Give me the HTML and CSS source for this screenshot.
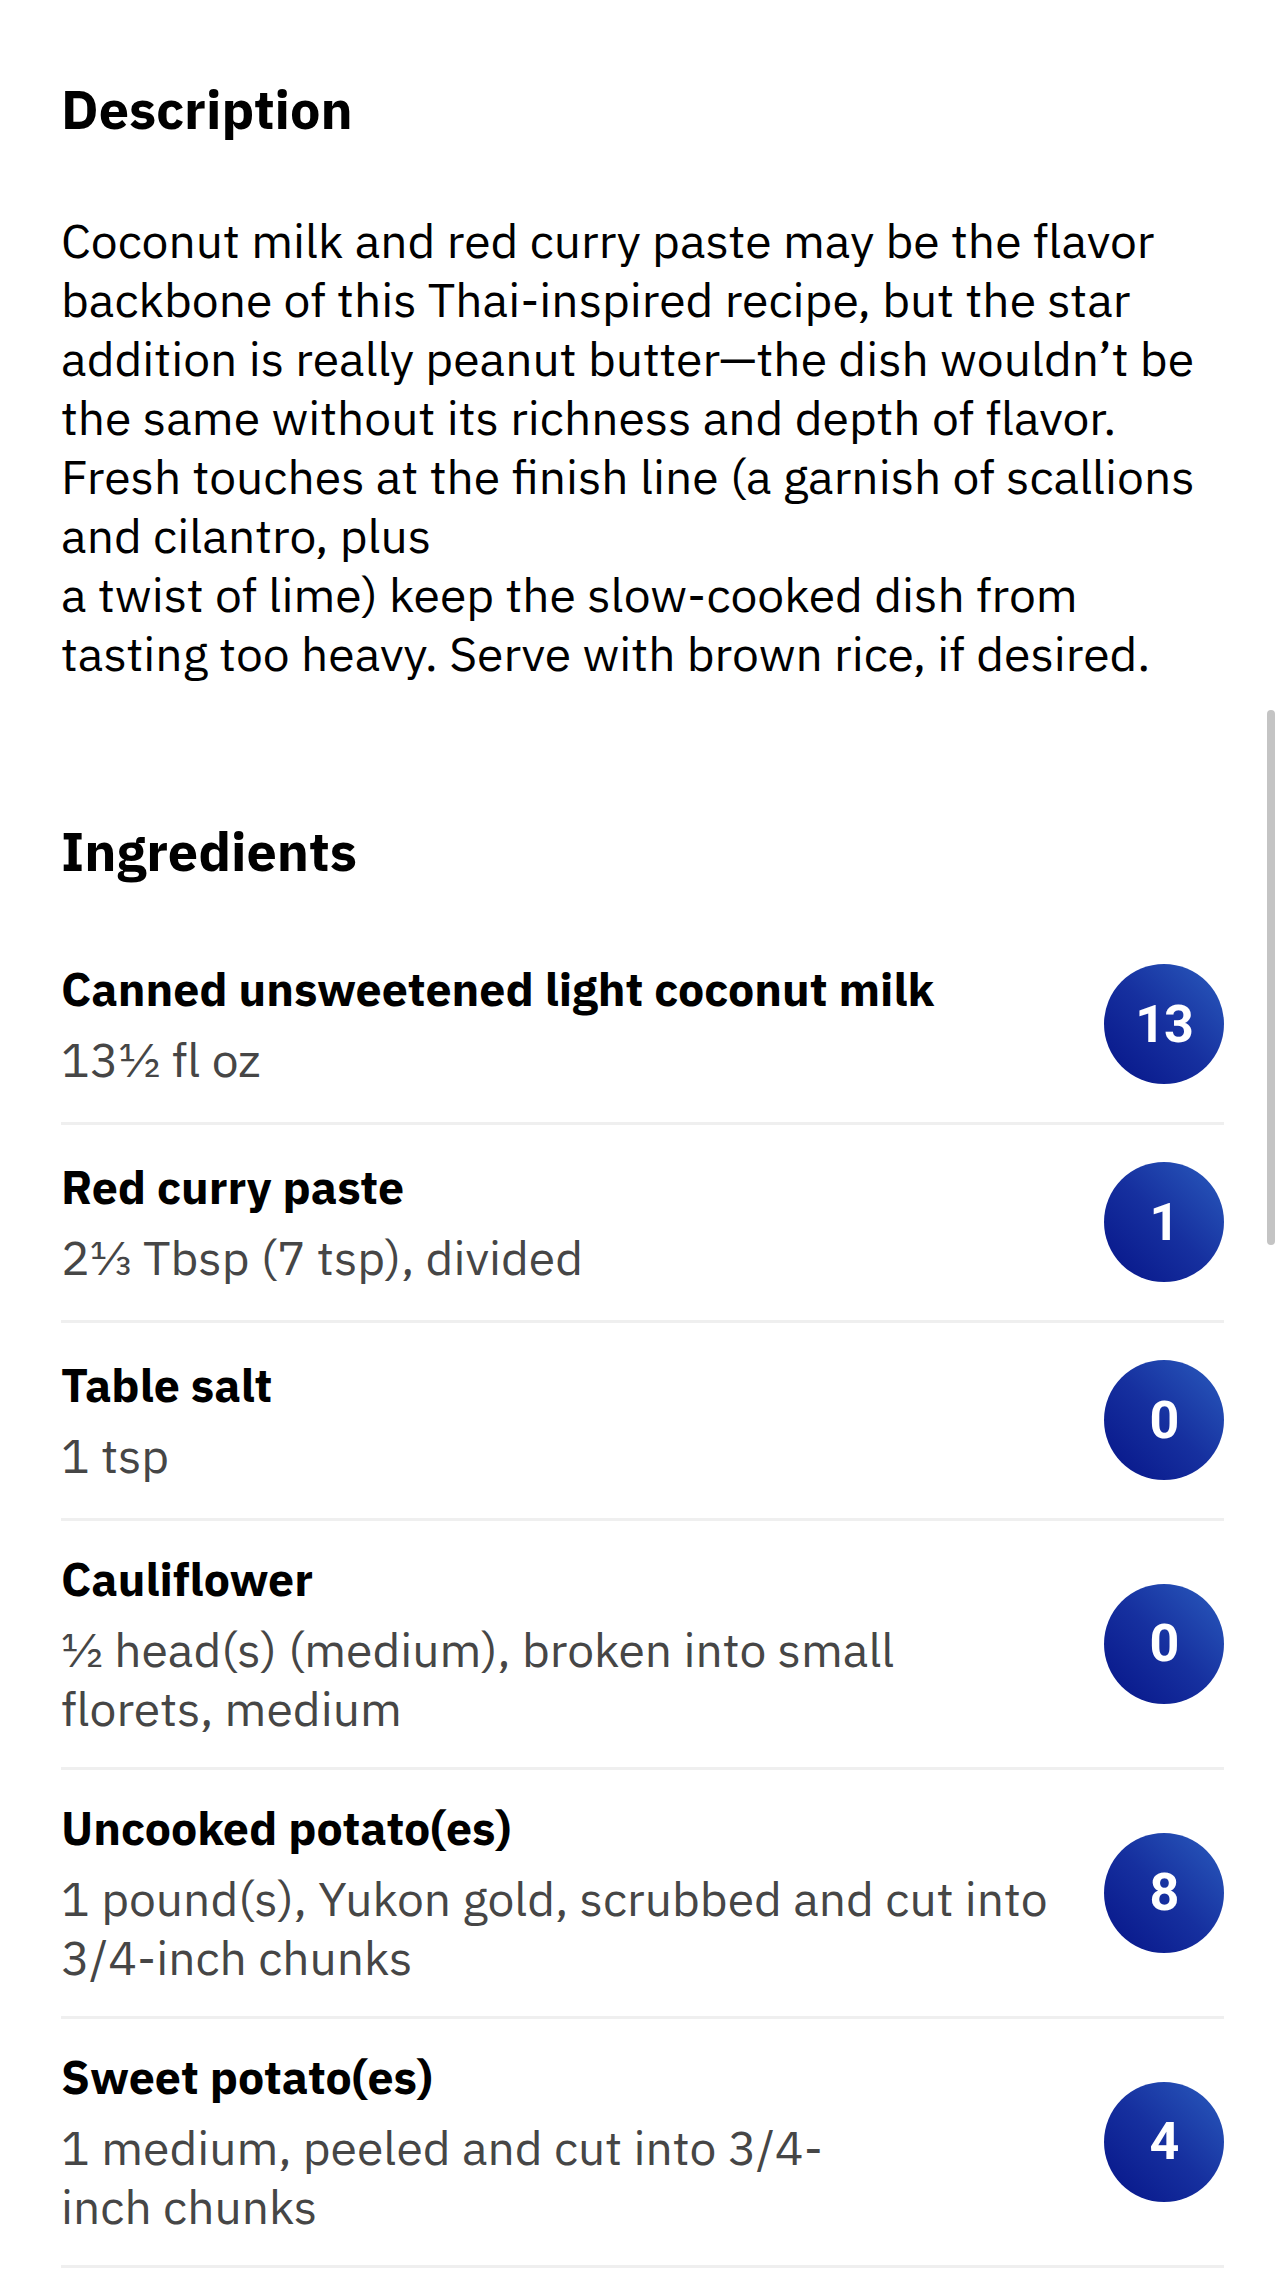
FILE: index.html
```html
<!DOCTYPE html>
<html lang="en">
<head>
<meta charset="utf-8">
<title>Recipe</title>
<link rel="stylesheet" href="styles.css">
</head>
<body>
<main class="recipe">
  <section class="description">
    <h2 class="section-title">Description</h2>
    <p class="description-text">Coconut milk and red curry paste may be the flavor backbone of this Thai-inspired recipe, but the star addition is really peanut butter—the dish wouldn’t be the same without its richness and depth of flavor. Fresh touches at the finish line (a garnish of scallions and cilantro, plus<br>a twist of lime) keep the slow-cooked dish from tasting too heavy. Serve with brown rice, if desired.</p>
  </section>
  <section class="ingredients">
    <h2 class="section-title">Ingredients</h2>
    <ul class="ingredient-list">
      <li class="ingredient">
        <div class="ingredient-info">
          <div class="ingredient-name">Canned unsweetened light coconut milk</div>
          <div class="ingredient-amount">13½ fl oz</div>
        </div>
        <span class="points">13</span>
      </li>
      <li class="ingredient">
        <div class="ingredient-info">
          <div class="ingredient-name">Red curry paste</div>
          <div class="ingredient-amount">2⅓ Tbsp (7 tsp), divided</div>
        </div>
        <span class="points">1</span>
      </li>
      <li class="ingredient">
        <div class="ingredient-info">
          <div class="ingredient-name">Table salt</div>
          <div class="ingredient-amount">1 tsp</div>
        </div>
        <span class="points">0</span>
      </li>
      <li class="ingredient">
        <div class="ingredient-info">
          <div class="ingredient-name">Cauliflower</div>
          <div class="ingredient-amount">½ head(s) (medium), broken into small florets, medium</div>
        </div>
        <span class="points">0</span>
      </li>
      <li class="ingredient">
        <div class="ingredient-info">
          <div class="ingredient-name">Uncooked potato(es)</div>
          <div class="ingredient-amount">1 pound(s), Yukon gold, scrubbed and cut into 3/4-inch chunks</div>
        </div>
        <span class="points">8</span>
      </li>
      <li class="ingredient">
        <div class="ingredient-info">
          <div class="ingredient-name">Sweet potato(es)</div>
          <div class="ingredient-amount">1 medium, peeled and cut into 3/4-inch&nbsp;chunks</div>
        </div>
        <span class="points">4</span>
      </li>
    </ul>
  </section>
</main>
<div class="scrollbar"></div>
</body>
</html>
```

FILE: styles.css
```css
html, body {
  margin: 0;
  padding: 0;
  background: #ffffff;
}

body {
  font-family: "IBM Plex Sans", "Noto Sans", "Liberation Sans", sans-serif;
  color: #000000;
}

.recipe {
  padding: 77px 60px 0 61px;
}

.section-title {
  margin: 0;
  font-size: 54px;
  line-height: 64px;
  font-weight: 700;
}

.description-text {
  margin: 70px 0 0;
  font-size: 48px;
  line-height: 59px;
  font-weight: 400;
}

.ingredients {
  margin-top: 136px;
}

.ingredient-list {
  list-style: none;
  margin: 44px 0 0;
  padding: 0;
}

.ingredient {
  display: flex;
  align-items: center;
  padding: 28px 0 29px;
  border-bottom: 3px solid #efefef;
}

.ingredient-info {
  flex: 1;
  margin-right: 54px;
}

.ingredient-name {
  font-size: 46.5px;
  line-height: 59px;
  font-weight: 700;
}

.ingredient-amount {
  margin-top: 12px;
  font-size: 48px;
  line-height: 59px;
  color: #464646;
}

.points {
  flex: none;
  width: 120px;
  height: 120px;
  margin: 9px 0;
  border-radius: 50%;
  background: linear-gradient(45deg, #061488 0%, #16309f 50%, #2a5bbd 100%);
  color: #ffffff;
  font-family: Roboto, "Noto Sans", sans-serif;
  font-weight: 700;
  font-size: 52px;
  letter-spacing: -1px;
  display: flex;
  align-items: center;
  justify-content: center;
}

.scrollbar {
  position: fixed;
  top: 710px;
  right: 9px;
  width: 8px;
  height: 535px;
  border-radius: 4px;
  background: #c4c4c4;
}
```
